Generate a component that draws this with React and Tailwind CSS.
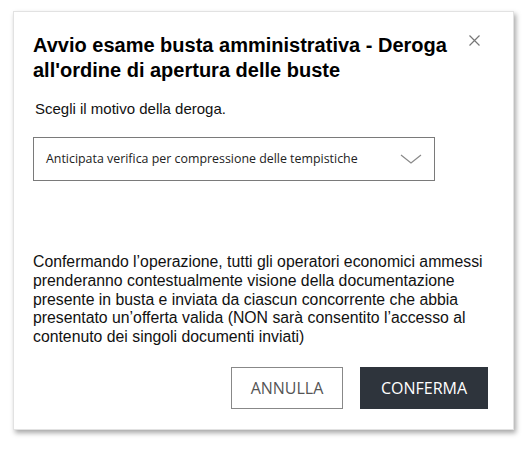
export default function App() {
    return (
        <div className="w-[529px] h-[449px] bg-white pl-[13px] pt-[11px]">
            <div className="w-[501px] h-[419px] bg-white border border-[#e2e2e2] shadow-[2px_3px_5px_rgba(0,0,0,0.35)] flex flex-col pl-[19px] pr-[20px] pt-[21px] font-['Liberation_Sans',Arial,sans-serif] text-[#111]">
                <div className="flex items-start justify-between">
                    <h2 className="text-[20px] leading-[25px] font-bold text-black">
                        Avvio esame busta amministrativa - Deroga<br />all'ordine di apertura delle buste
                    </h2>
                    <button className="mt-[2px] mr-[13px] text-[#777]">
                        <svg width="11" height="11" viewBox="0 0 11 11" stroke="currentColor" strokeWidth="1.2" fill="none">
                            <path d="M0.5 0.5L10.5 10.5M10.5 0.5L0.5 10.5" />
                        </svg>
                    </button>
                </div>
                <p className="mt-[17px] pl-[2px] text-[15px] leading-[18px] text-[#111]">Scegli il motivo della deroga.</p>
                <div className="mt-[19px] w-[402px] h-[44px] border border-[#7a7a7a] flex items-center justify-between pl-[12px] pr-[12px]">
                    <span className="font-['Open_Sans',sans-serif] text-[12.4px] text-[#222]">Anticipata verifica per compressione delle tempistiche</span>
                    <svg width="22" height="10" viewBox="0 0 22 10" fill="none" stroke="#888" strokeWidth="1.2">
                        <path d="M1 1L11 9L21 1" />
                    </svg>
                </div>
                <p className="mt-[72px] text-[15.8px] leading-[18.8px] text-[#111] w-[475px]">
                    Confermando l’operazione, tutti gli operatori economici ammessi prenderanno contestualmente visione della documentazione presente in busta e inviata da ciascun concorrente che abbia presentato un’offerta valida (NON sarà consentito l’accesso al contenuto dei singoli documenti inviati)
                </p>
                <div className="mt-auto mb-[20px] flex justify-end gap-[17px] pr-[5px] font-['Open_Sans',sans-serif] text-[16px]">
                    <button className="w-[112px] h-[42px] border border-[#888] text-[#555] bg-white">ANNULLA</button>
                    <button className="w-[128px] h-[42px] bg-[#2e343c] text-white">CONFERMA</button>
                </div>
            </div>
        </div>
    );
}
